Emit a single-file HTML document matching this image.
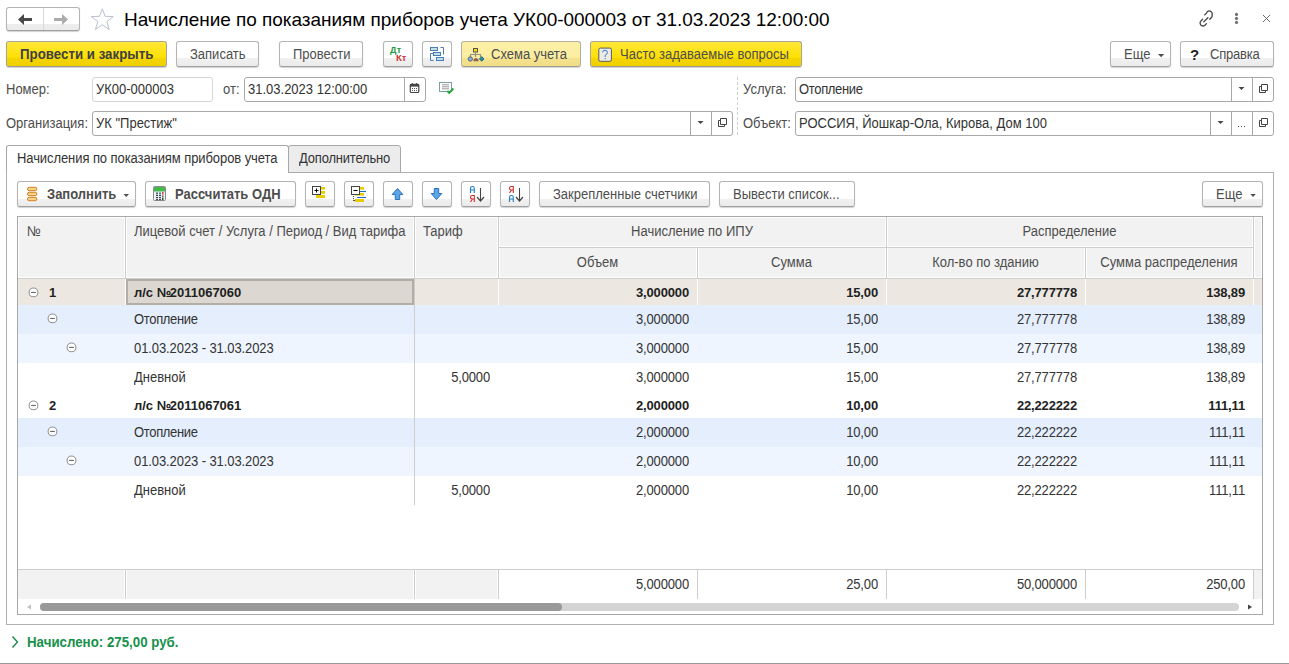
<!DOCTYPE html>
<html><head><meta charset="utf-8">
<style>
*{box-sizing:border-box;margin:0;padding:0}
html,body{width:1289px;height:664px;overflow:hidden;background:#fff}
body{position:relative;font-family:"Liberation Sans",sans-serif;font-size:13px;color:#333}
.a{position:absolute}
.t{position:absolute;white-space:pre;line-height:13px;height:13px;transform:scaleY(1.1);transform-origin:0 11px}
.t.b,.t.nt{transform:none}
.t.b.tb{transform:scaleY(1.1)}
.n{letter-spacing:-0.15px}
.btn{position:absolute;border:1px solid #b4b4b4;border-bottom-color:#a0a0a0;border-radius:3px;
 background:linear-gradient(to bottom,#fff 0,#fff 16px,#f1f1f1 16px,#ebebeb 100%);
 box-shadow:0 1px 1px rgba(0,0,0,.18)}
.btn2{background:linear-gradient(to bottom,#fff 0,#fff 17px,#f1f1f1 17px,#ebebeb 100%)}
.ybtn{position:absolute;border:1px solid #aaa596;border-bottom-color:#9a9890;border-radius:3px;
 background:linear-gradient(to bottom,#ffe83a 0,#fde000 16px,#f4d400 16px,#f0d000 100%);
 box-shadow:0 1px 1px rgba(0,0,0,.18)}
.lybtn{position:absolute;border:1px solid #b4b0a0;border-bottom-color:#a09c90;border-radius:3px;
 background:linear-gradient(to bottom,#fcf0a8 0,#fbeda0 16px,#f4e28e 16px,#f1dd88 100%);
 box-shadow:0 1px 1px rgba(0,0,0,.18)}
.fld{position:absolute;border:1px solid #a8a8a8;border-radius:3px;background:#fff}
.lbl{color:#4d4d4d}
.b{font-weight:bold}
svg{position:absolute;overflow:visible}
</style></head><body>

<!-- ===== Title bar ===== -->
<div class="btn" style="left:6px;top:7px;width:74px;height:24px;background:linear-gradient(to bottom,#fff 0,#fff 16px,#ededed 16px,#ebebeb 100%)"></div>
<div class="a" style="left:43px;top:8px;width:1px;height:22px;background:#d8d8d8"></div>
<svg style="left:0;top:0" width="1" height="1">
 <path d="M18 19.5 L24 14 L24 18.1 L32 18.1 L32 20.9 L24 20.9 L24 25 Z" fill="#484848"/>
 <path d="M68 19.5 L62 14 L62 18.1 L54 18.1 L54 20.9 L62 20.9 L62 25 Z" fill="#ababab"/>
 <path d="M102.3 8.8 L105.1 16.3 L113.2 16.6 L106.8 21.6 L109.1 29.4 L102.3 24.8 L95.5 29.4 L97.8 21.6 L91.4 16.6 L99.5 16.3 Z" fill="none" stroke="#b9bfcc" stroke-width="1"/>
</svg>
<div class="t nt" style="left:124px;top:10px;font-size:19px;letter-spacing:-0.04px;line-height:19px;height:19px;color:#000">Начисление по показаниям приборов учета УК00-000003 от 31.03.2023 12:00:00</div>

<svg style="left:0;top:0" width="1" height="1">
 <!-- link -->
 <g fill="none" stroke="#404040" stroke-width="1.3" stroke-linecap="round" transform="translate(-0.8 1.4)">
  <path d="M1205.5 13.5 L1207.3 11.7 A2.9 2.9 0 0 1 1212.9 13.3 A2.9 2.9 0 0 1 1212.3 16.1 L1210.6 17.8"/>
  <path d="M1203.4 17.9 L1201.6 19.7 A2.9 2.9 0 0 0 1201 22.5 A2.9 2.9 0 0 0 1203.8 24.6 A2.9 2.9 0 0 0 1205.5 24.0 L1207.3 22.2"/>
  <path d="M1204.5 20.5 L1208.7 16.3"/>
 </g>
 <circle cx="1236.5" cy="14.4" r="1.6" fill="#707070"/>
 <circle cx="1236.5" cy="18.4" r="1.6" fill="#707070"/>
 <circle cx="1236.5" cy="22.4" r="1.6" fill="#707070"/>
 <path d="M1263 15 L1270 22 M1270 15 L1263 22" stroke="#5a5a5a" stroke-width="0.9"/>
</svg>

<!-- ===== Command bar ===== -->
<div class="ybtn" style="left:6px;top:41px;width:161px;height:26px"></div>
<div class="t b tb" style="left:20px;top:48px;color:#404040;font-size:13.3px">Провести и закрыть</div>

<div class="btn" style="left:176px;top:41px;width:83px;height:26px"></div>
<div class="t" style="left:190px;top:48px;color:#4d4d4d">Записать</div>

<div class="btn" style="left:279px;top:41px;width:84px;height:26px"></div>
<div class="t" style="left:293px;top:48px;color:#4d4d4d">Провести</div>

<div class="btn" style="left:383px;top:41px;width:30px;height:26px"></div>
<div class="t b" style="left:390px;top:45px;font-size:9px;line-height:10px;color:#1c9a3c;letter-spacing:0.4px">Дт</div>
<div class="t b" style="left:396px;top:53px;font-size:9.5px;line-height:10px;color:#d03434">Кт</div>

<div class="btn" style="left:422px;top:41px;width:30px;height:26px"></div>
<svg style="left:0;top:0" width="1" height="1">
 <g fill="#bfe3e3" stroke="#4b7db5" stroke-width="1">
  <rect x="430.5" y="47.5" width="7" height="3"/>
  <rect x="433.5" y="52.5" width="7" height="3"/>
  <rect x="436.5" y="57.5" width="7" height="3"/>
 </g>
 <path d="M440.5 47.5 H443.5 V54.5 M433.5 53.5 H430.5 V60.5 H433.5" fill="none" stroke="#4b7db5"/>
</svg>

<div class="lybtn" style="left:461px;top:41px;width:120px;height:26px"></div>
<svg style="left:0;top:0" width="1" height="1">
 <rect x="473.5" y="48.5" width="4" height="3.5" fill="#f8d800" stroke="#555" stroke-width="1"/>
 <path d="M475.5 52 V57 M470.5 57 V54.5 H480.5 V57" fill="none" stroke="#8e9486" stroke-width="1.2"/>
 <circle cx="470.3" cy="59" r="2.2" fill="#7fb3e8" stroke="#555" stroke-width=".8"/>
 <path d="M473.8 60.8 A2.2 2.2 0 0 1 478.2 60.8 Z" fill="#e05050" stroke="#555" stroke-width=".8"/>
 <path d="M481.7 56.6 L484 58.9 L481.7 61.2 L479.4 58.9 Z" fill="#159c9c" stroke="#1a4a8a" stroke-width=".8"/>
</svg>
<div class="t" style="left:491px;top:48px;color:#4d4d4d">Схема учета</div>

<div class="ybtn" style="left:590px;top:41px;width:212px;height:26px"></div>
<svg style="left:0;top:0" width="1" height="1">
 <rect x="598.8" y="48.1" width="12.6" height="13.2" rx="1.5" fill="#efebe3" stroke="#565b66" stroke-width="1"/>
 <path d="M602.6 52.4 Q602.6 50.2 605 50.2 Q607.4 50.2 607.4 52.5 Q607.4 54.2 605.2 55.3 L605.2 57" fill="none" stroke="#2a7fd4" stroke-width="1"/>
 <circle cx="605.2" cy="58.6" r=".7" fill="#2a7fd4"/>
</svg>
<div class="t" style="left:620px;top:48px;color:#4d4d4d">Часто задаваемые вопросы</div>

<div class="btn" style="left:1110px;top:41px;width:61px;height:26px"></div>
<div class="t" style="left:1124px;top:48px;color:#4d4d4d">Еще</div>
<svg style="left:0;top:0" width="1" height="1"><path d="M1158 54 H1164.2 L1161.1 57.2 Z" fill="#505050"/></svg>

<div class="btn" style="left:1180px;top:41px;width:94px;height:26px"></div>
<div class="t b" style="left:1190px;top:47px;font-size:15px;line-height:15px;color:#222">?</div>
<div class="t" style="left:1210px;top:48px;color:#4d4d4d;letter-spacing:-0.2px">Справка</div>

<!-- ===== Header fields ===== -->
<div class="t lbl" style="left:6px;top:83px">Номер:</div>
<div class="fld" style="left:92px;top:77px;width:121px;height:25px;border-color:#d6d6d6"></div>
<div class="t" style="left:96px;top:83px">УК00-000003</div>

<div class="t lbl" style="left:223px;top:83px">от:</div>
<div class="fld" style="left:244px;top:77px;width:182px;height:25px"></div>
<div class="a" style="left:404px;top:78px;width:1px;height:23px;background:#a8a8a8"></div>
<div class="t" style="left:248px;top:83px">31.03.2023 12:00:00</div>
<svg style="left:0;top:0" width="1" height="1">
 <rect x="410.3" y="84.3" width="8.5" height="8.2" rx="1" fill="#fff" stroke="#444" stroke-width="1.2"/>
 <rect x="410" y="84" width="9" height="2.6" fill="#444"/>
 <rect x="411.8" y="83" width="1" height="1.6" fill="#444"/><rect x="416.2" y="83" width="1" height="1.6" fill="#444"/>
 <g fill="#555"><rect x="412" y="88" width="1" height="1"/><rect x="414" y="88" width="1" height="1"/><rect x="416" y="88" width="1" height="1"/>
 <rect x="412" y="90" width="1" height="1"/><rect x="414" y="90" width="1" height="1"/><rect x="416" y="90" width="1" height="1"/></g>
 <rect x="439.5" y="82.5" width="12" height="9" fill="#fff" stroke="#7c9fa2" stroke-width="1"/>
 <path d="M442 84.8 H449 M442 86.8 H449 M442 88.8 H449" stroke="#999" stroke-width="1"/>
 <path d="M447.3 91 L449.2 92.9 L453.4 88.5" fill="none" stroke="#22a83a" stroke-width="2"/>
</svg>

<div class="t lbl" style="left:6px;top:117px">Организация:</div>
<div class="fld" style="left:92px;top:111px;width:641px;height:25px"></div>
<div class="a" style="left:690px;top:112px;width:1px;height:23px;background:#a8a8a8"></div>
<div class="a" style="left:711px;top:112px;width:1px;height:23px;background:#a8a8a8"></div>
<div class="t" style="left:96px;top:117px">УК "Престиж"</div>

<div class="a" style="left:737px;top:77px;width:0;height:58px;border-left:1px dashed #d0d0d0"></div>

<div class="t lbl" style="left:743px;top:83px">Услуга:</div>
<div class="fld" style="left:795px;top:77px;width:479px;height:25px"></div>
<div class="a" style="left:1231px;top:78px;width:1px;height:23px;background:#a8a8a8"></div>
<div class="a" style="left:1252px;top:78px;width:1px;height:23px;background:#a8a8a8"></div>
<div class="t" style="left:799px;top:83px;letter-spacing:-0.33px">Отопление</div>

<div class="t lbl" style="left:743px;top:117px">Объект:</div>
<div class="fld" style="left:795px;top:111px;width:479px;height:25px"></div>
<div class="a" style="left:1210px;top:112px;width:1px;height:23px;background:#a8a8a8"></div>
<div class="a" style="left:1231px;top:112px;width:1px;height:23px;background:#a8a8a8"></div>
<div class="a" style="left:1252px;top:112px;width:1px;height:23px;background:#a8a8a8"></div>
<div class="t" style="left:799px;top:117px">РОССИЯ, Йошкар-Ола, Кирова, Дом 100</div>

<svg style="left:0;top:0" width="1" height="1">
 <g fill="#444">
  <path d="M697.5 121 H703.5 L700.5 124 Z"/>
  <path d="M1238.5 87 H1244.5 L1241.5 90 Z"/>
  <path d="M1217.5 121 H1223.5 L1220.5 124 Z"/>
  <rect x="1238" y="126" width="1" height="1"/><rect x="1241" y="126" width="1" height="1"/><rect x="1244" y="126" width="1" height="1"/>
 </g>
 <g fill="none" stroke="#444" stroke-width="1">
  <path d="M720.5 120.5 H718.5 V126.5 H724.5 V124.5 M720.5 118.5 H726.5 V124.5 H720.5 Z"/>
  <path d="M1261.5 86.5 H1259.5 V92.5 H1265.5 V90.5 M1261.5 84.5 H1267.5 V90.5 H1261.5 Z"/>
  <path d="M1261.5 120.5 H1259.5 V126.5 H1265.5 V124.5 M1261.5 118.5 H1267.5 V124.5 H1261.5 Z"/>
 </g>
</svg>

<!-- ===== Tabs ===== -->
<div class="a" style="left:6px;top:172px;width:1268px;height:453px;border:1px solid #b0b0b0;border-top-color:#b0b0b0"></div>
<div class="a" style="left:288px;top:145px;width:113px;height:28px;border:1px solid #a8a8a8;border-radius:3px 3px 0 0;background:#ececec"></div>
<div class="a" style="left:6px;top:145px;width:283px;height:28px;border:1px solid #a8a8a8;border-bottom:none;border-radius:3px 3px 0 0;background:#fff"></div>
<div class="t" style="left:17px;top:152px;letter-spacing:-0.08px">Начисления по показаниям приборов учета</div>
<div class="t" style="left:299px;top:152px;letter-spacing:-0.19px">Дополнительно</div>
<!-- ===== Table toolbar ===== -->
<div class="btn btn2" style="left:17px;top:181px;width:119px;height:26px"></div>
<svg style="left:0;top:0" width="1" height="1">
 <g fill="#f2d58a" stroke="#d2801e" stroke-width="1">
  <rect x="27.5" y="187.3" width="9.4" height="3.4" rx="1.7"/>
  <rect x="27.5" y="192.3" width="9.4" height="3.4" rx="1.7"/>
  <rect x="27.5" y="197.3" width="9.4" height="3.4" rx="1.7"/>
 </g>
</svg>
<div class="t b tb" style="left:47px;top:188px;color:#4d4d4d">Заполнить</div>
<svg style="left:0;top:0" width="1" height="1"><path d="M123.5 194 H129 L126.25 197 Z" fill="#505050"/></svg>

<div class="btn btn2" style="left:145px;top:181px;width:151px;height:26px"></div>
<svg style="left:0;top:0" width="1" height="1">
 <rect x="153.5" y="186.5" width="12" height="14" rx="1" fill="#e8f4fa" stroke="#8a8a8a"/>
 <rect x="154" y="187" width="11" height="4.5" fill="#46b84c"/>
 <g fill="#444"><rect x="156" y="192.5" width="2" height="1.3"/><rect x="159" y="192.5" width="2" height="1.3" fill="#2c6c7c"/>
 <rect x="156" y="194.7" width="2" height="1.3"/><rect x="159" y="194.7" width="2" height="1.3"/>
 <rect x="156" y="196.9" width="2" height="1.3"/><rect x="159" y="196.9" width="2" height="1.3"/>
 <rect x="156" y="199" width="2" height="1.1"/><rect x="159" y="199" width="2" height="1.1"/>
 <rect x="162" y="195.5" width="1.5" height="1.3"/><rect x="162" y="197.5" width="1.5" height="2.6"/></g>
 <rect x="162" y="192" width="1.6" height="2.6" fill="#e04848"/>
</svg>
<div class="t b tb" style="left:175px;top:188px;color:#4d4d4d">Рассчитать ОДН</div>

<div class="btn btn2" style="left:305px;top:181px;width:30px;height:26px"></div>
<svg style="left:0;top:0" width="1" height="1">
 <g fill="#e8cc00"><rect x="321" y="187" width="4" height="2.6"/><rect x="321" y="191" width="4" height="2.8"/><rect x="316" y="195" width="9" height="3"/></g>
 <rect x="312.5" y="186.5" width="8" height="8" fill="#fff" stroke="#444"/>
 <path d="M314.5 190.5 H318.5 M316.5 188.5 V192.5" stroke="#000" stroke-width="1"/>
</svg>

<div class="btn btn2" style="left:344px;top:181px;width:30px;height:26px"></div>
<svg style="left:0;top:0" width="1" height="1">
 <g fill="#e8cc00"><rect x="360" y="187" width="4" height="2.6"/><rect x="355" y="193" width="9" height="2.6"/><rect x="355" y="199" width="9" height="3"/></g>
 <path d="M360 191.5 H366 M357 197.5 H366" stroke="#1a6cc0" stroke-width="1"/>
 <rect x="351.5" y="186.5" width="8" height="8" fill="#fff" stroke="#444"/>
 <path d="M353.5 190.5 H357.5" stroke="#000" stroke-width="1"/>
 <g fill="#555"><rect x="353" y="196" width="1" height="1"/><rect x="353" y="198" width="1" height="1"/><rect x="353" y="200" width="2" height="1"/></g>
</svg>

<div class="btn btn2" style="left:383px;top:181px;width:30px;height:26px"></div>
<svg style="left:0;top:0" width="1" height="1">
 <path d="M397.5 188.5 L402.8 194.5 L399.7 194.5 L399.7 199.5 L395.3 199.5 L395.3 194.5 L392.2 194.5 Z" fill="#5aa6e6" stroke="#2b6fbf" stroke-width="1" stroke-linejoin="round"/>
</svg>
<div class="btn btn2" style="left:422px;top:181px;width:30px;height:26px"></div>
<svg style="left:0;top:0" width="1" height="1">
 <path d="M436.5 199.5 L441.8 193.5 L438.7 193.5 L438.7 188.5 L434.3 188.5 L434.3 193.5 L431.2 193.5 Z" fill="#5aa6e6" stroke="#2b6fbf" stroke-width="1" stroke-linejoin="round"/>
</svg>

<div class="btn btn2" style="left:461px;top:181px;width:30px;height:26px"></div>
<svg style="left:0;top:0" width="1" height="1">
 <path d="M470.5 193 V188.2 Q470.5 186.5 472.4 186.5 Q474.3 186.5 474.3 188.2 V193 M470.5 190 H474.3" fill="none" stroke="#1f7fc4" stroke-width="1.1"/>
 <path d="M474.3 202 V195.5 H472.2 Q470.5 195.5 470.5 197.3 Q470.5 199 472.2 199 H474.3 M472.5 199 L470.5 202" fill="none" stroke="#d42b2b" stroke-width="1.1"/>
 <path d="M480.5 188 V200" stroke="#444" stroke-width="1.1"/>
 <path d="M477 197 L480.5 201 L484 197" fill="none" stroke="#444" stroke-width="1.2"/>
</svg>
<div class="btn btn2" style="left:500px;top:181px;width:30px;height:26px"></div>
<svg style="left:0;top:0" width="1" height="1">
 <path d="M513.3 193 V186.5 H511.2 Q509.5 186.5 509.5 188.3 Q509.5 190 511.2 190 H513.3 M511.5 190 L509.5 193" fill="none" stroke="#d42b2b" stroke-width="1.1"/>
 <path d="M509.5 202 V197.2 Q509.5 195.5 511.4 195.5 Q513.3 195.5 513.3 197.2 V202 M509.5 199 H513.3" fill="none" stroke="#1f7fc4" stroke-width="1.1"/>
 <path d="M519.5 188 V200" stroke="#444" stroke-width="1.1"/>
 <path d="M516 197 L519.5 201 L523 197" fill="none" stroke="#444" stroke-width="1.2"/>
</svg>

<div class="btn btn2" style="left:539px;top:181px;width:171px;height:26px"></div>
<div class="t" style="left:553px;top:188px;color:#4d4d4d">Закрепленные счетчики</div>
<div class="btn btn2" style="left:719px;top:181px;width:136px;height:26px"></div>
<div class="t" style="left:733px;top:188px;color:#4d4d4d">Вывести список...</div>

<div class="btn btn2" style="left:1202px;top:181px;width:61px;height:26px"></div>
<div class="t" style="left:1216px;top:188px;color:#4d4d4d">Еще</div>
<svg style="left:0;top:0" width="1" height="1"><path d="M1250.3 194 H1255.8 L1253.05 197 Z" fill="#505050"/></svg>
<!-- ===== Table ===== -->
<div class="a" style="left:17px;top:216px;width:1246px;height:399px;border:1px solid #a8a8a8;background:#fff"></div>
<div class="a" style="left:18px;top:217px;width:107px;height:61px;background:#f2f2f2;border:1px solid #fff"></div>
<div class="a" style="left:126px;top:217px;width:288px;height:61px;background:#f2f2f2;border:1px solid #fff"></div>
<div class="a" style="left:415px;top:217px;width:83px;height:61px;background:#f2f2f2;border:1px solid #fff"></div>
<div class="a" style="left:499px;top:217px;width:387px;height:30px;background:#f2f2f2;border:1px solid #fff"></div>
<div class="a" style="left:887px;top:217px;width:366px;height:30px;background:#f2f2f2;border:1px solid #fff"></div>
<div class="a" style="left:499px;top:247px;width:198px;height:31px;background:#f2f2f2;border:1px solid #fff"></div>
<div class="a" style="left:698px;top:247px;width:188px;height:31px;background:#f2f2f2;border:1px solid #fff"></div>
<div class="a" style="left:887px;top:247px;width:198px;height:31px;background:#f2f2f2;border:1px solid #fff"></div>
<div class="a" style="left:1086px;top:247px;width:167px;height:31px;background:#f2f2f2;border:1px solid #fff"></div>
<div class="a" style="left:1254px;top:217px;width:8px;height:61px;background:#f2f2f2;border:1px solid #fff"></div>
<div class="a" style="left:125px;top:217px;width:1px;height:61px;background:#cdcdcd"></div>
<div class="a" style="left:414px;top:217px;width:1px;height:61px;background:#cdcdcd"></div>
<div class="a" style="left:498px;top:217px;width:1px;height:61px;background:#cdcdcd"></div>
<div class="a" style="left:697px;top:247px;width:1px;height:31px;background:#cdcdcd"></div>
<div class="a" style="left:886px;top:217px;width:1px;height:61px;background:#cdcdcd"></div>
<div class="a" style="left:1085px;top:247px;width:1px;height:31px;background:#cdcdcd"></div>
<div class="a" style="left:1253px;top:217px;width:1px;height:61px;background:#cdcdcd"></div>
<div class="a" style="left:498px;top:247px;width:755px;height:1px;background:#cdcdcd"></div>
<div class="a" style="left:18px;top:278px;width:1244px;height:1px;background:#cdcdcd"></div>
<div class="t" style="left:27px;top:225px;color:#4d4d4d">№</div>
<div class="t" style="left:134px;top:225px;color:#4d4d4d">Лицевой счет / Услуга / Период / Вид тарифа</div>
<div class="t" style="left:423px;top:225px;color:#4d4d4d">Тариф</div>
<div class="t" style="left:498px;top:225px;width:388px;text-align:center;color:#4d4d4d">Начисление по ИПУ</div>
<div class="t" style="left:886px;top:225px;width:367px;text-align:center;color:#4d4d4d">Распределение</div>
<div class="t" style="left:498px;top:256px;width:199px;text-align:center;color:#4d4d4d">Объем</div>
<div class="t" style="left:697px;top:256px;width:189px;text-align:center;color:#4d4d4d">Сумма</div>
<div class="t" style="left:886px;top:256px;width:199px;text-align:center;color:#4d4d4d">Кол-во по зданию</div>
<div class="t" style="left:1085px;top:256px;width:168px;text-align:center;color:#4d4d4d">Сумма распределения</div>
<div class="a" style="left:18px;top:279px;width:1244px;height:26px;background:#ece8e1"></div>
<div class="a" style="left:125px;top:279px;width:1px;height:26px;background:#fff"></div>
<div class="a" style="left:498px;top:279px;width:1px;height:26px;background:#fff"></div>
<div class="a" style="left:697px;top:279px;width:1px;height:26px;background:#fff"></div>
<div class="a" style="left:886px;top:279px;width:1px;height:26px;background:#fff"></div>
<div class="a" style="left:1085px;top:279px;width:1px;height:26px;background:#fff"></div>
<div class="a" style="left:1253px;top:279px;width:1px;height:26px;background:#fff"></div>
<div class="a" style="left:126px;top:279px;width:288px;height:26px;border:2px solid #b2aea6;background:#dcd8d1"></div>
<svg style="left:0;top:0" width="1" height="1"><circle cx="33.5" cy="292.4" r="4.4" fill="#fff" stroke="#959595" stroke-width="1.1"/><path d="M31.1 292.4 H35.9" stroke="#5a5a5a" stroke-width="1"/></svg>
<div class="t b n" style="left:49px;top:286px;color:#222">1</div>
<div class="t b" style="left:134px;top:286px;color:#222;letter-spacing:0px">л/с <span style="letter-spacing:-1.5px">№</span>2011067060</div>
<div class="t b n" style="left:489px;top:286px;width:200px;text-align:right;color:#222">3,000000</div>
<div class="t b n" style="left:678px;top:286px;width:200px;text-align:right;color:#222">15,00</div>
<div class="t b n" style="left:877px;top:286px;width:200px;text-align:right;color:#222">27,777778</div>
<div class="t b n" style="left:1045px;top:286px;width:200px;text-align:right;color:#222">138,89</div>
<div class="a" style="left:18px;top:305px;width:1244px;height:29px;background:#e4eefd"></div>
<svg style="left:0;top:0" width="1" height="1"><circle cx="52.5" cy="318.4" r="4.4" fill="#fff" stroke="#959595" stroke-width="1.1"/><path d="M50.1 318.4 H54.9" stroke="#5a5a5a" stroke-width="1"/></svg>
<div class="t " style="left:134px;top:313px;color:#333;letter-spacing:-0.33px">Отопление</div>
<div class="t  n" style="left:489px;top:313px;width:200px;text-align:right;color:#333">3,000000</div>
<div class="t  n" style="left:678px;top:313px;width:200px;text-align:right;color:#333">15,00</div>
<div class="t  n" style="left:877px;top:313px;width:200px;text-align:right;color:#333">27,777778</div>
<div class="t  n" style="left:1045px;top:313px;width:200px;text-align:right;color:#333">138,89</div>
<div class="a" style="left:18px;top:334px;width:1244px;height:29px;background:#eef5ff"></div>
<svg style="left:0;top:0" width="1" height="1"><circle cx="71.5" cy="347.4" r="4.4" fill="#fff" stroke="#959595" stroke-width="1.1"/><path d="M69.1 347.4 H73.9" stroke="#5a5a5a" stroke-width="1"/></svg>
<div class="t " style="left:134px;top:342px;color:#333;letter-spacing:-0.09px">01.03.2023 - 31.03.2023</div>
<div class="t  n" style="left:489px;top:342px;width:200px;text-align:right;color:#333">3,000000</div>
<div class="t  n" style="left:678px;top:342px;width:200px;text-align:right;color:#333">15,00</div>
<div class="t  n" style="left:877px;top:342px;width:200px;text-align:right;color:#333">27,777778</div>
<div class="t  n" style="left:1045px;top:342px;width:200px;text-align:right;color:#333">138,89</div>
<div class="a" style="left:18px;top:363px;width:1244px;height:29px;background:#ffffff"></div>
<div class="t " style="left:134px;top:371px;color:#333;letter-spacing:0px">Дневной</div>
<div class="t  n" style="left:290px;top:371px;width:200px;text-align:right;color:#333">5,0000</div>
<div class="t  n" style="left:489px;top:371px;width:200px;text-align:right;color:#333">3,000000</div>
<div class="t  n" style="left:678px;top:371px;width:200px;text-align:right;color:#333">15,00</div>
<div class="t  n" style="left:877px;top:371px;width:200px;text-align:right;color:#333">27,777778</div>
<div class="t  n" style="left:1045px;top:371px;width:200px;text-align:right;color:#333">138,89</div>
<div class="a" style="left:18px;top:392px;width:1244px;height:26px;background:#ffffff"></div>
<svg style="left:0;top:0" width="1" height="1"><circle cx="33.5" cy="405.4" r="4.4" fill="#fff" stroke="#959595" stroke-width="1.1"/><path d="M31.1 405.4 H35.9" stroke="#5a5a5a" stroke-width="1"/></svg>
<div class="t b n" style="left:49px;top:399px;color:#222">2</div>
<div class="t b" style="left:134px;top:399px;color:#222;letter-spacing:0px">л/с <span style="letter-spacing:-1.5px">№</span>2011067061</div>
<div class="t b n" style="left:489px;top:399px;width:200px;text-align:right;color:#222">2,000000</div>
<div class="t b n" style="left:678px;top:399px;width:200px;text-align:right;color:#222">10,00</div>
<div class="t b n" style="left:877px;top:399px;width:200px;text-align:right;color:#222">22,222222</div>
<div class="t b n" style="left:1045px;top:399px;width:200px;text-align:right;color:#222">111,11</div>
<div class="a" style="left:18px;top:418px;width:1244px;height:29px;background:#e4eefd"></div>
<svg style="left:0;top:0" width="1" height="1"><circle cx="52.5" cy="431.4" r="4.4" fill="#fff" stroke="#959595" stroke-width="1.1"/><path d="M50.1 431.4 H54.9" stroke="#5a5a5a" stroke-width="1"/></svg>
<div class="t " style="left:134px;top:426px;color:#333;letter-spacing:-0.33px">Отопление</div>
<div class="t  n" style="left:489px;top:426px;width:200px;text-align:right;color:#333">2,000000</div>
<div class="t  n" style="left:678px;top:426px;width:200px;text-align:right;color:#333">10,00</div>
<div class="t  n" style="left:877px;top:426px;width:200px;text-align:right;color:#333">22,222222</div>
<div class="t  n" style="left:1045px;top:426px;width:200px;text-align:right;color:#333">111,11</div>
<div class="a" style="left:18px;top:447px;width:1244px;height:29px;background:#eef5ff"></div>
<svg style="left:0;top:0" width="1" height="1"><circle cx="71.5" cy="460.4" r="4.4" fill="#fff" stroke="#959595" stroke-width="1.1"/><path d="M69.1 460.4 H73.9" stroke="#5a5a5a" stroke-width="1"/></svg>
<div class="t " style="left:134px;top:455px;color:#333;letter-spacing:-0.09px">01.03.2023 - 31.03.2023</div>
<div class="t  n" style="left:489px;top:455px;width:200px;text-align:right;color:#333">2,000000</div>
<div class="t  n" style="left:678px;top:455px;width:200px;text-align:right;color:#333">10,00</div>
<div class="t  n" style="left:877px;top:455px;width:200px;text-align:right;color:#333">22,222222</div>
<div class="t  n" style="left:1045px;top:455px;width:200px;text-align:right;color:#333">111,11</div>
<div class="a" style="left:18px;top:476px;width:1244px;height:29px;background:#ffffff"></div>
<div class="t " style="left:134px;top:484px;color:#333;letter-spacing:0px">Дневной</div>
<div class="t  n" style="left:290px;top:484px;width:200px;text-align:right;color:#333">5,0000</div>
<div class="t  n" style="left:489px;top:484px;width:200px;text-align:right;color:#333">2,000000</div>
<div class="t  n" style="left:678px;top:484px;width:200px;text-align:right;color:#333">10,00</div>
<div class="t  n" style="left:877px;top:484px;width:200px;text-align:right;color:#333">22,222222</div>
<div class="t  n" style="left:1045px;top:484px;width:200px;text-align:right;color:#333">111,11</div>
<div class="a" style="left:414px;top:279px;width:1px;height:226px;background:#cdcdcd"></div>
<div class="a" style="left:18px;top:569px;width:1244px;height:1px;background:#cdcdcd"></div>
<div class="a" style="left:18px;top:570px;width:480px;height:29px;background:#f2f2f2"></div>
<div class="a" style="left:1254px;top:570px;width:8px;height:29px;background:#f2f2f2"></div>
<div class="a" style="left:125px;top:570px;width:1px;height:29px;background:#cdcdcd"></div>
<div class="a" style="left:414px;top:570px;width:1px;height:29px;background:#cdcdcd"></div>
<div class="a" style="left:498px;top:570px;width:1px;height:29px;background:#cdcdcd"></div>
<div class="a" style="left:697px;top:570px;width:1px;height:29px;background:#cdcdcd"></div>
<div class="a" style="left:886px;top:570px;width:1px;height:29px;background:#cdcdcd"></div>
<div class="a" style="left:1085px;top:570px;width:1px;height:29px;background:#cdcdcd"></div>
<div class="a" style="left:1253px;top:570px;width:1px;height:29px;background:#cdcdcd"></div>
<div class="a" style="left:124px;top:570px;width:1px;height:29px;background:#fff"></div>
<div class="a" style="left:126px;top:570px;width:1px;height:29px;background:#fff"></div>
<div class="a" style="left:413px;top:570px;width:1px;height:29px;background:#fff"></div>
<div class="a" style="left:415px;top:570px;width:1px;height:29px;background:#fff"></div>
<div class="a" style="left:497px;top:570px;width:1px;height:29px;background:#fff"></div>
<div class="t n" style="left:489px;top:578px;width:200px;text-align:right;color:#333">5,000000</div>
<div class="t n" style="left:678px;top:578px;width:200px;text-align:right;color:#333">25,00</div>
<div class="t n" style="left:877px;top:578px;width:200px;text-align:right;color:#333">50,000000</div>
<div class="t n" style="left:1045px;top:578px;width:200px;text-align:right;color:#333">250,00</div>
<div class="a" style="left:40px;top:603px;width:1199px;height:8px;border-radius:4px;background:#d4d4d4"></div>
<div class="a" style="left:40px;top:603px;width:522px;height:8px;border-radius:4px;background:#999"></div>
<svg style="left:0;top:0" width="1" height="1"><path d="M27 607 L31 604.5 V609.5 Z" fill="#c0c0c0"/><path d="M1252 607 L1248 604.5 V609.5 Z" fill="#444"/></svg>
<!-- ===== Footer ===== -->
<svg style="left:0;top:0" width="1" height="1"><path d="M12.5 636.5 L17.5 642 L12.5 647.5" fill="none" stroke="#1a8a4a" stroke-width="1.4"/></svg>
<div class="t b" style="left:27px;top:636px;color:#17914a;font-size:13.3px;transform:scaleY(1.1);transform-origin:0 11px">Начислено: 275,00 руб.</div>
<div class="a" style="left:0;top:663px;width:1289px;height:1px;background:#999"></div>
</body></html>
